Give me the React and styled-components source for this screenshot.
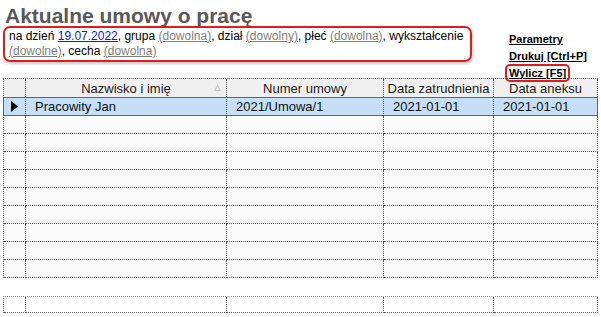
import React from "react";
import styled, { createGlobalStyle, css } from "styled-components";

const GlobalStyle = createGlobalStyle`
  html, body {
    margin: 0;
    padding: 0;
    background: #fff;
  }
  body {
    font-family: "Liberation Sans", Arial, sans-serif;
    color: #000;
  }
`;

const Page = styled.div`
  width: 601px;
  height: 317px;
  overflow: hidden;
  display: flex;
  flex-direction: column;
`;

const Title = styled.h1`
  margin: 0;
  height: 26px;
  box-sizing: border-box;
  padding: 5px 0 0 5px;
  font-size: 21px;
  line-height: 21px;
  font-weight: 700;
  color: #595959;
  white-space: nowrap;
`;

const TopBar = styled.div`
  display: flex;
  align-items: flex-start;
  height: 52px;
  padding-left: 3px;
  position: relative;
  z-index: 1;
`;

const ParamsBox = styled.div`
  width: 469px;
  height: 36px;
  box-sizing: border-box;
  border: 2px solid #e41b1b;
  border-radius: 7px;
  box-shadow: 1px 2px 3px rgba(0, 0, 0, 0.22);
  padding: 1px 4px;
  font-size: 12px;
  line-height: 15px;
`;

const DateLink = styled.a`
  color: #1515e8;
  text-decoration: underline;
`;

const AnyLink = styled.a`
  color: #7f7f7f;
  text-decoration: underline;
`;

const Links = styled.div`
  display: flex;
  flex-direction: column;
  align-items: flex-start;
  margin: 5px 0 0 33px;
`;

const ActionLink = styled.a`
  display: block;
  padding: 0 2px;
  border: 2px solid transparent;
  border-radius: 5px;
  font-size: 11px;
  line-height: 13px;
  font-weight: 700;
  color: #000;
  text-decoration: underline;
  white-space: nowrap;
  ${(p) =>
    p.$active &&
    css`
      border-color: #e41b1b;
      padding: 1px 2px 0;
      margin-top: -1px;
    `}
`;

const Grid = styled.div`
  margin-left: 3px;
  width: 595px;
  border-top: 1px dotted ${(p) => (p.$light ? "#9a9a9a" : "#5a5a5a")};
  border-left: 1px dotted #5a5a5a;
  box-sizing: border-box;
`;

const cols = "22px 201px 157px 110px 104px";

const Row = styled.div`
  display: grid;
  grid-template-columns: ${cols};
  height: ${(p) => p.$h || 18}px;
  background: ${(p) => p.$bg || "#fbfbfb"};
  ${(p) =>
    p.$selected &&
    css`
      background: #c4dff6;
      margin-left: -1px;
      grid-template-columns: 23px 201px 157px 110px 104px;
      & > div {
        border-top: 1px solid #1f74c8;
        border-bottom: 1px solid #1f74c8;
      }
      & > div:first-child {
        border-left: 1px solid #1f74c8;
      }
      & > div:last-child {
        border-right: 1px solid #1f74c8;
      }
    `}
`;

const Cell = styled.div`
  box-sizing: border-box;
  display: flex;
  align-items: center;
  justify-content: ${(p) => (p.$center ? "center" : "flex-start")};
  padding-left: ${(p) => (p.$center ? 0 : 9)}px;
  border-right: 1px dotted #5a5a5a;
  border-bottom: 1px dotted #5a5a5a;
  font-size: 13px;
  color: #111;
  white-space: nowrap;
  overflow: hidden;
  position: relative;
`;

const HeadCell = styled(Cell)`
  justify-content: center;
  padding-left: 0;
  border-bottom: none;
  color: #1a1a1a;
`;

const SortMark = styled.svg`
  position: absolute;
  right: 5px;
  top: 6px;
`;

const Footer = styled(Grid)`
  margin-top: 18px;
`;

const emptyRows = Array.from({ length: 9 });

export default function App() {
  return (
    <Page>
      <GlobalStyle />
      <Title>Aktualne umowy o pracę</Title>
      <TopBar>
        <ParamsBox>
          na dzień <DateLink>19.07.2022</DateLink>, grupa{" "}
          <AnyLink>(dowolna)</AnyLink>, dział <AnyLink>(dowolny)</AnyLink>,
          płeć <AnyLink>(dowolna)</AnyLink>, wykształcenie{" "}
          <AnyLink>(dowolne)</AnyLink>, cecha <AnyLink>(dowolna)</AnyLink>
        </ParamsBox>
        <Links>
          <ActionLink>Parametry</ActionLink>
          <ActionLink>Drukuj [Ctrl+P]</ActionLink>
          <ActionLink $active>Wylicz [F5]</ActionLink>
        </Links>
      </TopBar>

      <Grid>
        <Row $h={18} $bg="#f0f0f0">
          <HeadCell />
          <HeadCell>
            Nazwisko i imię
            <SortMark width="7" height="6" viewBox="0 0 7 6">
              <polygon
                points="3.5,0.5 6.5,5.5 0.5,5.5"
                fill="none"
                stroke="#c4c4c4"
                strokeWidth="1"
              />
            </SortMark>
          </HeadCell>
          <HeadCell>Numer umowy</HeadCell>
          <HeadCell>Data zatrudnienia</HeadCell>
          <HeadCell>Data aneksu</HeadCell>
        </Row>
        <Row $selected $h={19}>
          <Cell $center>
            <svg width="7" height="11" viewBox="0 0 7 11">
              <polygon points="0,0 7,5.5 0,11" fill="#000" />
            </svg>
          </Cell>
          <Cell>Pracowity Jan</Cell>
          <Cell>2021/Umowa/1</Cell>
          <Cell>2021-01-01</Cell>
          <Cell>2021-01-01</Cell>
        </Row>
        {emptyRows.map((_, i) => (
          <Row key={i}>
            <Cell />
            <Cell />
            <Cell />
            <Cell />
            <Cell />
          </Row>
        ))}
      </Grid>

      <Footer $light>
        <Row $h={16} $bg="#fff">
          <Cell />
          <Cell />
          <Cell />
          <Cell />
          <Cell />
        </Row>
      </Footer>
    </Page>
  );
}
